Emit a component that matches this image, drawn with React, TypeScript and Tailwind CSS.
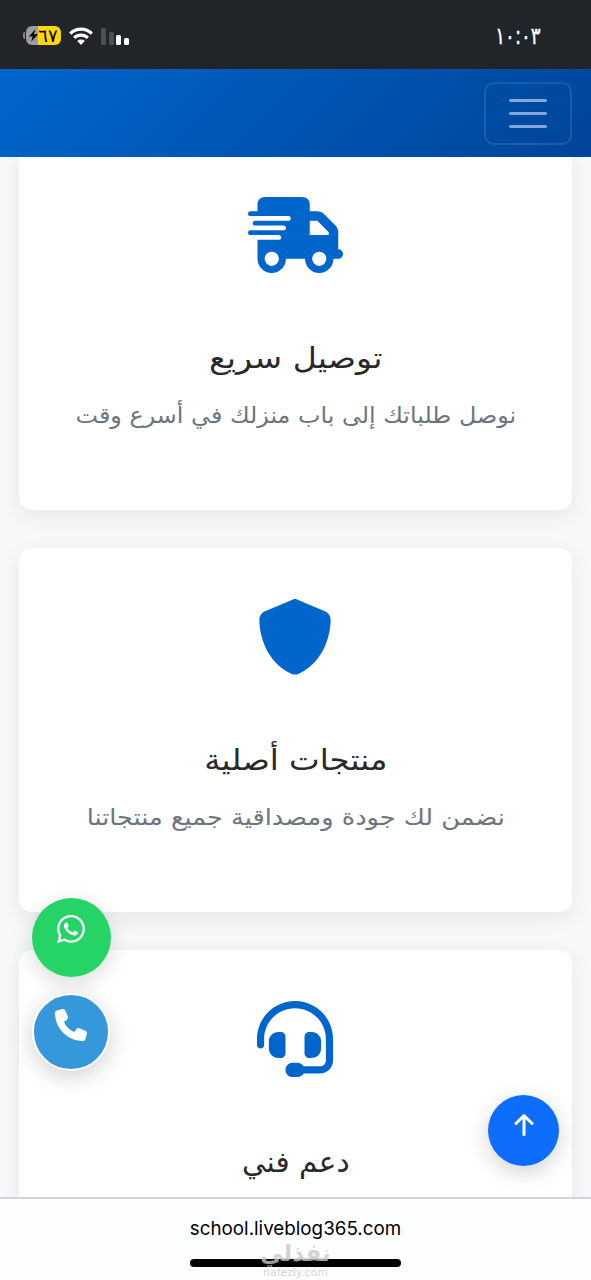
import React from "react";
import clsx from "clsx";
import { BsWhatsapp } from "react-icons/bs";
import { FaHeadset, FaPhone, FaShield, FaTruckFast } from "react-icons/fa6";

const features = [
  {
    icon: <FaTruckFast className="h-[76px] w-[95px]" />,
    title: "توصيل سريع",
    titleStyle: "text-[29px] scale-x-[1.145]",
    text: "نوصل طلباتك إلى باب منزلك في أسرع وقت",
    textStyle: "text-[22.5px] scale-x-[1.06]",
  },
  {
    icon: <FaShield className="h-[76px] w-[76px]" />,
    title: "منتجات أصلية",
    titleStyle: "text-[29px] scale-x-[1.12]",
    text: "نضمن لك جودة ومصداقية جميع منتجاتنا",
    textStyle: "text-[22.5px] scale-x-[1.138]",
  },
  {
    icon: <FaHeadset className="h-[76px] w-[76px]" />,
    title: "دعم فني",
    titleStyle: "text-[29px] scale-x-[1.02]",
    text: "",
    textStyle: "text-[22.5px]",
  },
];

export default function App() {
  return (
    <div className="relative flex h-[1280px] w-full flex-col overflow-hidden bg-[#f6f8fa] font-['DejaVu_Sans',sans-serif]">
      <StatusBar />
      <Navbar />

      <main className="-mt-[11px] flex min-h-0 flex-1 flex-col gap-[38px] overflow-hidden px-[19px]">
        {features.map((feature) => (
          <FeatureCard key={feature.title} {...feature} />
        ))}
      </main>

      <FloatingButtons />
      <AddressBar />
    </div>
  );
}

function StatusBar() {
  return (
    <div className="flex h-[69px] shrink-0 items-start justify-between bg-[#212529] pt-[26px] pr-[50px] pl-[23px]">
      <div className="flex items-center">
        <span className="h-[7px] w-[2px] rounded-l-full bg-[#85878a]" />
        <div className="ml-px flex h-[19px] w-[35px] items-center justify-center overflow-hidden rounded-[6px] bg-linear-to-r from-[#9b9ca0] from-33% to-[#fdd60b] to-33%">
          <svg viewBox="0 0 10 14" className="h-[13px] w-[9px]" fill="#000">
            <path d="M7 0 0 8h4L2.5 14 10 5.5H5.5z" />
          </svg>
          <span className="text-[18px] leading-[19px] text-black">٦٧</span>
        </div>

        <svg viewBox="0 0 24 18" className="ml-[8px] h-[18px] w-[24px]">
          <g fill="none" stroke="#fff" strokeWidth="3.2">
            <path d="M1.2 6.6a15.4 15.4 0 0 1 21.6 0" />
            <path d="M5.2 10.8a9.8 9.8 0 0 1 13.6 0" />
          </g>
          <path fill="#fff" d="M8.2 14a5.6 5.6 0 0 1 7.6 0L12 17.9z" />
        </svg>

        <div className="ml-[8px] flex h-[18px] items-end gap-[2.5px]">
          <span className="h-[17px] w-[5px] rounded-[1.5px] bg-[#4d5053]" />
          <span className="h-[13px] w-[5px] rounded-[1.5px] bg-[#4d5053]" />
          <span className="h-[10px] w-[5px] rounded-[1.5px] bg-white" />
          <span className="h-[7px] w-[5px] rounded-[1.5px] bg-white" />
        </div>
      </div>

      <span className="origin-right scale-x-[0.76] text-[24px] leading-[20px] text-white [-webkit-text-stroke:0.4px_white]">
        ١٠:٠٣
      </span>
    </div>
  );
}

function Navbar() {
  return (
    <header className="relative z-10 flex h-[88px] shrink-0 items-center justify-end bg-[linear-gradient(135deg,#0066cc,#004499)] pr-[19px]">
      <button className="flex h-[63px] w-[88px] flex-col items-center justify-center gap-[10px] rounded-[10px] border-2 border-white/10">
        <span className="h-[3px] w-[38px] rounded-full bg-[#80a8d8]" />
        <span className="h-[3px] w-[38px] rounded-full bg-[#80a8d8]" />
        <span className="h-[3px] w-[38px] rounded-full bg-[#80a8d8]" />
      </button>
    </header>
  );
}

function FeatureCard({
  icon,
  title,
  titleStyle,
  text,
  textStyle,
}: (typeof features)[number]) {
  return (
    <section
      dir="rtl"
      className="flex h-[364px] shrink-0 flex-col items-center rounded-[13px] bg-white pt-[51px] shadow-[0_6px_22px_rgba(0,0,0,0.07)]"
    >
      <div className="mr-px text-[#0066cc]">{icon}</div>
      <h5
        className={clsx(
          "mt-[65px] h-[40px] leading-[40px] whitespace-nowrap text-[#27292b]",
          titleStyle,
        )}
      >
        {title}
      </h5>
      <p
        className={clsx(
          "mt-[17px] h-[40px] leading-[40px] whitespace-nowrap text-[#6c757d]",
          textStyle,
        )}
      >
        {text}
      </p>
    </section>
  );
}

function FloatingButtons() {
  return (
    <>
      <div className="absolute top-[898px] left-[31.5px] z-20 flex flex-col items-center gap-[16px]">
        <button className="flex h-[79px] w-[79px] justify-center rounded-full bg-[#25d366] pt-[17px] shadow-[0_6px_22px_rgba(0,0,0,0.15)]">
          <BsWhatsapp className="h-[28px] w-[28px] text-white" />
        </button>
        <button className="flex h-[78px] w-[78px] justify-center rounded-full border-2 border-white bg-[#3498db] pt-[14px] shadow-[0_6px_22px_rgba(0,0,0,0.18)]">
          <FaPhone className="h-[32px] w-[32px] text-white" />
        </button>
      </div>

      <button className="absolute top-[1095px] left-[488px] z-20 flex h-[71px] w-[71px] justify-center rounded-full bg-[#0d6efd] pt-[18px] shadow-[0_6px_22px_rgba(0,0,0,0.18)]">
        <svg
          viewBox="0 0 20 24"
          className="h-[24px] w-[20px]"
          fill="none"
          stroke="#fff"
          strokeWidth="3"
          strokeLinecap="round"
          strokeLinejoin="round"
        >
          <path d="M10 21.5V2.5M2 10.5l8-8 8 8" />
        </svg>
      </button>
    </>
  );
}

function AddressBar() {
  return (
    <footer className="relative z-30 flex h-[83px] shrink-0 flex-col items-center border-t-2 border-[#d3d6d8] bg-[#fdfefe]">
      <span className="mt-[17px] font-[Inter,sans-serif] text-[18.8px] leading-[26px] text-black">
        school.liveblog365.com
      </span>
      <div className="mt-[17px] h-[8px] w-[211px] rounded-full bg-black" />

      {/* watermark */}
      <div className="absolute top-[40px] left-0 flex w-full flex-col items-center text-[#c8c8c8]/80">
        <span className="text-[23px] leading-[28px] font-bold">نفذلي</span>
        <span className="text-[11px] leading-[12px]">nafezly.com</span>
      </div>
    </footer>
  );
}
